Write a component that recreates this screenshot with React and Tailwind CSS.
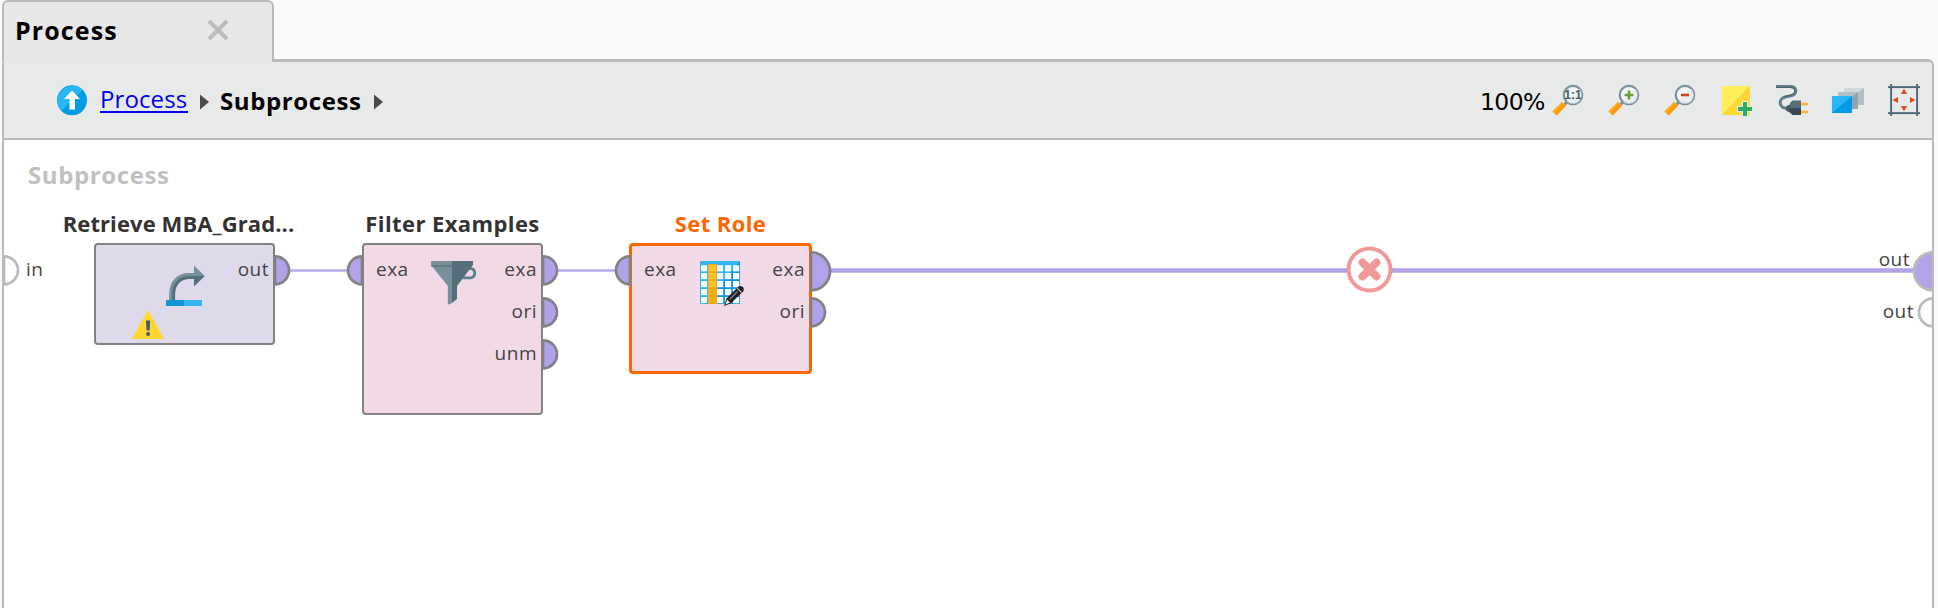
import React from "react";

const PORT_FILL = "#b1a2e9";

/* ---------- toolbar icons (32 x 32) ---------- */

function Magnifier({ children }) {
  return (
    <svg className="h-8 w-8 shrink-0" viewBox="0 0 32 32">
      <path d="M12.5 20.5L15.5 17.5" stroke="#78909c" strokeWidth="3" />
      <path d="M2.6 29.4L12 20" stroke="#ff9800" strokeWidth="5.6" />
      <path d="M1.4 28.2L10.8 18.8" stroke="#ffa726" strokeWidth="2.4" />
      <circle cx="21" cy="11" r="9.2" fill="#f3f5f6" stroke="#78909c" strokeWidth="2.2" />
      <path d="M14.6 17.4A9 9 0 0 0 27.4 4.6Z" fill="#e4e9ec" opacity=".6" />
      {children}
    </svg>
  );
}

function NoteIcon() {
  return (
    <svg className="h-8 w-8 shrink-0" viewBox="0 0 32 32">
      <path d="M2 2H30V31H2Z" fill="#fdd835" />
      <path d="M2 2H30L2 31Z" fill="#ffee58" />
      <path d="M25 17V33M17 25H33" stroke="#e9ebea" strokeWidth="6.4" />
      <path d="M25 18V32M18 25H32" stroke="#27ae60" strokeWidth="4" />
    </svg>
  );
}

function PlugIcon() {
  return (
    <svg className="h-8 w-8 shrink-0" viewBox="0 0 32 32" fill="none">
      <path d="M0 2.5H14C21 2.5 22 10 15 11.8L9 13C2 15 2.5 24.5 12 24.5" stroke="#607d8b" strokeWidth="3" />
      <path d="M0 3.5H14C20 3.5 20.5 9.5 15 11L8.5 12.6" stroke="#455a64" strokeWidth=".9" />
      <path d="M10 22.5L14.5 20V29L10 26.5Z" fill="#455a64" />
      <path d="M16.5 16.5H25V24H14V19Z" fill="#546e7a" />
      <path d="M14 24H25V31H16.5L14 28.5Z" fill="#37474f" />
      <path d="M25 20H32M25 28H32" stroke="#ffb03a" strokeWidth="2.6" />
    </svg>
  );
}

function LayersIcon() {
  return (
    <svg className="h-8 w-8 shrink-0" viewBox="0 0 32 32">
      <path d="M12 4H32V21H12Z" fill="#b0bec5" />
      <path d="M12 4H32L12 21Z" fill="#cfd8dc" />
      <path d="M6 8H26V25H6Z" fill="#90a4ae" />
      <path d="M6 8H26L6 25Z" fill="#b0bec5" />
      <path d="M0 12H20V29H0Z" fill="#039be5" />
      <path d="M0 12H20L0 29Z" fill="#29b6f6" />
    </svg>
  );
}

function FitIcon() {
  return (
    <svg className="h-8 w-8 shrink-0" viewBox="0 0 32 32">
      <path d="M3 0V32M29 0V32M0 3H32M0 29H32" stroke="#607d8b" strokeWidth="2" />
      <path d="M3.6 0V32M29.6 0V32M0 3.6H32M0 29.6H32" stroke="#455a64" strokeWidth=".7" />
      <path d="M16 4.5L19 10H13ZM16 27.5L19 22H13ZM4.5 16L10 13V19ZM27.5 16L22 13V19Z" fill="#dd4b1a" />
    </svg>
  );
}

function Crumb() {
  return (
    <svg className="h-4 w-[9px]" viewBox="0 0 9 16">
      <path d="M0 0.5L9 8L0 15.5Z" fill="#4a4a4a" />
    </svg>
  );
}

/* ---------- operator icons, laid over the operator body ---------- */

function RetrieveIcon() {
  return (
    <>
      <svg className="absolute left-[70px] top-[19px] h-11 w-11" viewBox="0 0 44 44" fill="none">
        <path d="M6.2 36V30C6.2 19 13 12 23 12H29" stroke="#78909c" strokeWidth="6" />
        <path d="M7.6 36V30C7.6 20 14 13.5 23 13.500H29" stroke="#546e7a" strokeWidth="2.8" />
        <path d="M28 1.500L38.800 12H28Z" fill="#78909c" />
        <path d="M28 12H38.800L28 22.500Z" fill="#546e7a" />
        <path d="M0 36H18V42H0Z" fill="#1296db" />
        <path d="M18 36H36V42H18Z" fill="#35b4f0" />
      </svg>
      <svg className="absolute left-[36px] top-[65px] h-8 w-8" viewBox="0 0 32 32">
        <path d="M16 1L31.5 28.5H0.5Z" fill="#fdd835" stroke="#fdd835" strokeWidth="1" strokeLinejoin="round" />
        <path d="M14 10.5H18.2L17.6 20.5H14.6Z" fill="#455a64" />
        <circle cx="16.1" cy="24" r="2" fill="#455a64" />
      </svg>
    </>
  );
}

function FilterIcon() {
  return (
    <svg className="absolute left-[67px] top-[15px] h-[46px] w-12" viewBox="0 0 48 46" fill="none">
      <path d="M36.5 8.700H40C45 9.200 45 17.200 39.500 17.800H32" stroke="#607d8b" strokeWidth="2.8" />
      <path d="M0 1H21V43L16.8 44.8V26L0 5Z" fill="#78909c" />
      <path d="M21 1H42V5L26 26V39L21 43Z" fill="#546e7a" />
      <path d="M0 6H21" stroke="#546e7a" strokeWidth="1.2" />
    </svg>
  );
}

function SetRoleIcon() {
  return (
    <svg className="absolute left-[68px] top-[15px] h-12 w-12" viewBox="0 0 48 48">
      <path d="M0 0H40V43H0Z" fill="#35b4f0" />
      <path d="M40 0V43H4Z" fill="#1296db" />
      <path d="M0 0H40L37 3.500H0Z" fill="#35b4f0" />
      {[4.2, 12, 20, 28, 36].map((y) =>
        [1, 9, 17, 25, 33].map((x) => (
          <rect key={x + "-" + y} x={x} y={y} width={6.2} height={6.2} fill={x + y > 44 ? "#ffffff" : "#edf8fe"} />
        ))
      )}
      <path d="M8 3H17V43H8Z" fill="#f9a61a" />
      {[4.2, 12, 20, 28, 36].map((y) => (
        <rect key={y} x="9" y={y} width="7" height="6.2" fill={y > 26 ? "#f0ae12" : "#f6c62e"} />
      ))}
      <path d="M24 45L26.500 37.500L38.500 25.500Q41 24.300 43 26.200Q44.800 28.300 43.300 30.300L31 42.300Z" fill="#231f20" />
      <path d="M25.400 43.600L27.200 38.700L30 41.500Z" fill="#f1f1f1" />
      <path d="M29.500 38.500L37.500 30.500" stroke="#8a8a8a" strokeWidth="1.1" />
      <path d="M37.200 27.200L41.400 31.500" stroke="#c9c4c8" strokeWidth="1.1" />
    </svg>
  );
}

/* ---------- ports ---------- */

function Port({ className, facing = "right", big = false, stroke = "#828282", fill = PORT_FILL }) {
  const r = big ? 19 : 14;
  const cy = big ? 23.3 : 22.3;
  const x = facing === "right" ? 2 : 24;
  const sweep = facing === "right" ? 1 : 0;
  return (
    <svg className={"h-11 w-[26px] shrink-0 " + className} viewBox="0 0 26 44">
      <path
        d={`M${x} ${cy - r}A${r} ${r} 0 0 ${sweep} ${x} ${cy + r}Z`}
        fill={fill}
        stroke={stroke}
        strokeWidth="2.7"
      />
    </svg>
  );
}

function Label({ className = "-mt-0.5", children }) {
  return <span className={"whitespace-nowrap text-[19px] leading-6 tracking-[0.5px] text-[#444444] " + className}>{children}</span>;
}

function Operator({ place, title, titleClass, body, inputs = [], outputs, bigFirst, children }) {
  return (
    <div className={"absolute top-[69px] flex flex-col " + place}>
      <span className={"h-[34px] self-center whitespace-nowrap text-[22px] font-bold leading-7 " + titleClass}>{title}</span>
      <div className={"relative flex justify-between rounded-[4px] " + body}>
        <div className="flex flex-col">
          {inputs.map((name) => (
            <div key={name} className="flex h-[42px] items-center">
              <Port className="-ml-[26px] mr-3" facing="left" />
              <Label>{name}</Label>
            </div>
          ))}
        </div>
        {children}
        <div className="flex flex-col">
          {outputs.map((name, i) => (
            <div key={name} className="flex h-[42px] items-center justify-end">
              <Label>{name}</Label>
              <Port className="-mr-[26px] ml-1" big={bigFirst && i === 0} />
            </div>
          ))}
        </div>
      </div>
    </div>
  );
}

export default function App() {
  return (
    <div className="flex h-[608px] w-[1938px] flex-col overflow-hidden bg-[#fafafa] font-['Open_Sans','Noto_Sans',sans-serif]">
      <div className="relative z-10 ml-[2px] flex h-[62px] w-[272px] shrink-0 items-center justify-between rounded-t-[6px] border-x-2 border-t-2 border-[#bababa] bg-[#e8e8e8] pb-1 pl-[11px] pr-[43px]">
        <span className="text-[25px] font-bold leading-[34px] tracking-[1.1px] text-black">Process</span>
        <svg className="h-[22px] w-[22px]" viewBox="0 0 22 22">
          <path d="M2 2L20 20M20 2L2 20" stroke="#bcbcbc" strokeWidth="4" />
        </svg>
      </div>

      <div className="-mt-[3px] ml-[2px] flex w-[1932px] flex-1 flex-col rounded-t-[6px] border-x-2 border-t-[3px] border-[#bababa] bg-white">
        <div className="flex h-[78px] shrink-0 items-center justify-between rounded-tr-[4px] border-b-2 border-[#b9bbba] bg-[#e8eae9] pl-[53px] pr-3">
          <div className="flex items-center">
            <svg className="h-8 w-[30px]" viewBox="0 0 30 32">
              <circle cx="15" cy="16.3" r="15" fill="#039be5" />
              <path d="M4.4 26.9A15 15 0 0 1 25.6 5.7Z" fill="#29b6f6" />
              <path d="M15 6.5L23 15H18V25.5H12.5V15H7Z" fill="#fff" />
            </svg>
            <span className="-mt-[2px] ml-[13px] w-[88px] border-b-2 border-[#0000ee] text-[24px] leading-[25px] tracking-[0.1px] text-[#0000ee]">Process</span>
            <span className="ml-3 mt-1"><Crumb /></span>
            <span className="ml-[11px] mt-px w-[141px] text-[24px] font-bold leading-[30px] tracking-[0.6px] text-black">Subprocess</span>
            <span className="ml-[13px] mt-1"><Crumb /></span>
          </div>

          <div className="flex items-center gap-6">
            <span className="mr-[-18px] mt-[3px] w-[66px] font-['DejaVu_Sans',sans-serif] text-[23.5px] leading-[30px] tracking-[-0.6px] text-black">100%</span>
            <Magnifier>
              <text x="21" y="15.4" textAnchor="middle" fontSize="12" fontWeight="700" fill="#455a64" fontFamily="Liberation Sans, sans-serif">1:1</text>
            </Magnifier>
            <Magnifier>
              <path d="M21 6.6V15.4M16.6 11H25.4" stroke="#689f38" strokeWidth="2.6" />
            </Magnifier>
            <Magnifier>
              <path d="M17 11H25" stroke="#d84315" strokeWidth="2.6" />
            </Magnifier>
            <NoteIcon />
            <PlugIcon />
            <LayersIcon />
            <FitIcon />
          </div>
        </div>

        {/* Process canvas: the edge ports sit in the side columns, operators are placed freely */}
        <div className="relative flex flex-1 justify-between bg-white">
          <div className="flex flex-col pt-[18px]">
            <span className="ml-6 text-[24px] font-bold leading-[34px] tracking-[0.6px] text-[#c0c0c0]">Subprocess</span>
            <div className="mt-[57px] flex h-[42px] items-center">
              <Port className="-ml-0.5" stroke="#bababa" fill="#fff" />
              <Label className="-ml-0.5 -mt-0.5">in</Label>
            </div>
          </div>

          <svg className="absolute left-0 top-0 h-[300px] w-[1928px]" viewBox="0 0 1928 300">
            <path d="M285 130.5H345M553 130.5H613" stroke="#b8a9ec" strokeWidth="2.6" />
            <path d="M826 130.500H1912" stroke="#b1a2e9" strokeWidth="4.6" />
            <circle cx="1365.500" cy="129.500" r="21" fill="#fff" stroke="#f19999" strokeWidth="4" />
            <path d="M1358.500 122.500L1372.500 136.500M1372.500 122.500L1358.500 136.500" stroke="#f19999" strokeWidth="8" strokeLinecap="round" />
          </svg>

          <Operator
            place="left-[90px] w-[181px]"
            title="Retrieve MBA_Grad..."
            titleClass="-ml-3 tracking-[0.1px] text-[#333333]"
            body="h-[102px] border-2 border-[#828282] bg-[#dedaea] pt-1"
            outputs={["out"]}
          >
            <RetrieveIcon />
          </Operator>

          <Operator
            place="left-[358px] w-[181px]"
            title="Filter Examples"
            titleClass="tracking-[0.4px] text-[#333333]"
            body="h-[172px] border-2 border-[#828282] bg-[#f1d9e6] pt-1"
            inputs={["exa"]}
            outputs={["exa", "ori", "unm"]}
          >
            <FilterIcon />
          </Operator>

          <Operator
            place="left-[625px] w-[183px]"
            title="Set Role"
            titleClass="tracking-[0.4px] text-[#ff6600]"
            body="h-[131px] border-[3px] border-[#ff6600] bg-[#f1d9e6] pt-[3px]"
            inputs={["exa"]}
            outputs={["exa", "ori"]}
            bigFirst
          >
            <SetRoleIcon />
          </Operator>

          <div className="relative flex flex-col overflow-hidden pt-[109px]">
            <div className="flex h-[42px] items-center justify-end">
              <Label className="-mr-px -mt-[22px]">out</Label>
              <Port className="-mr-[3px]" facing="left" big stroke="#bababa" />
            </div>
            <div className="flex h-[42px] items-center justify-end">
              <Label className="-mr-[5px] -mt-0.5">out</Label>
              <Port className="-mr-[3px]" facing="left" stroke="#bababa" fill="#fff" />
            </div>
          </div>
        </div>
      </div>
    </div>
  );
}
